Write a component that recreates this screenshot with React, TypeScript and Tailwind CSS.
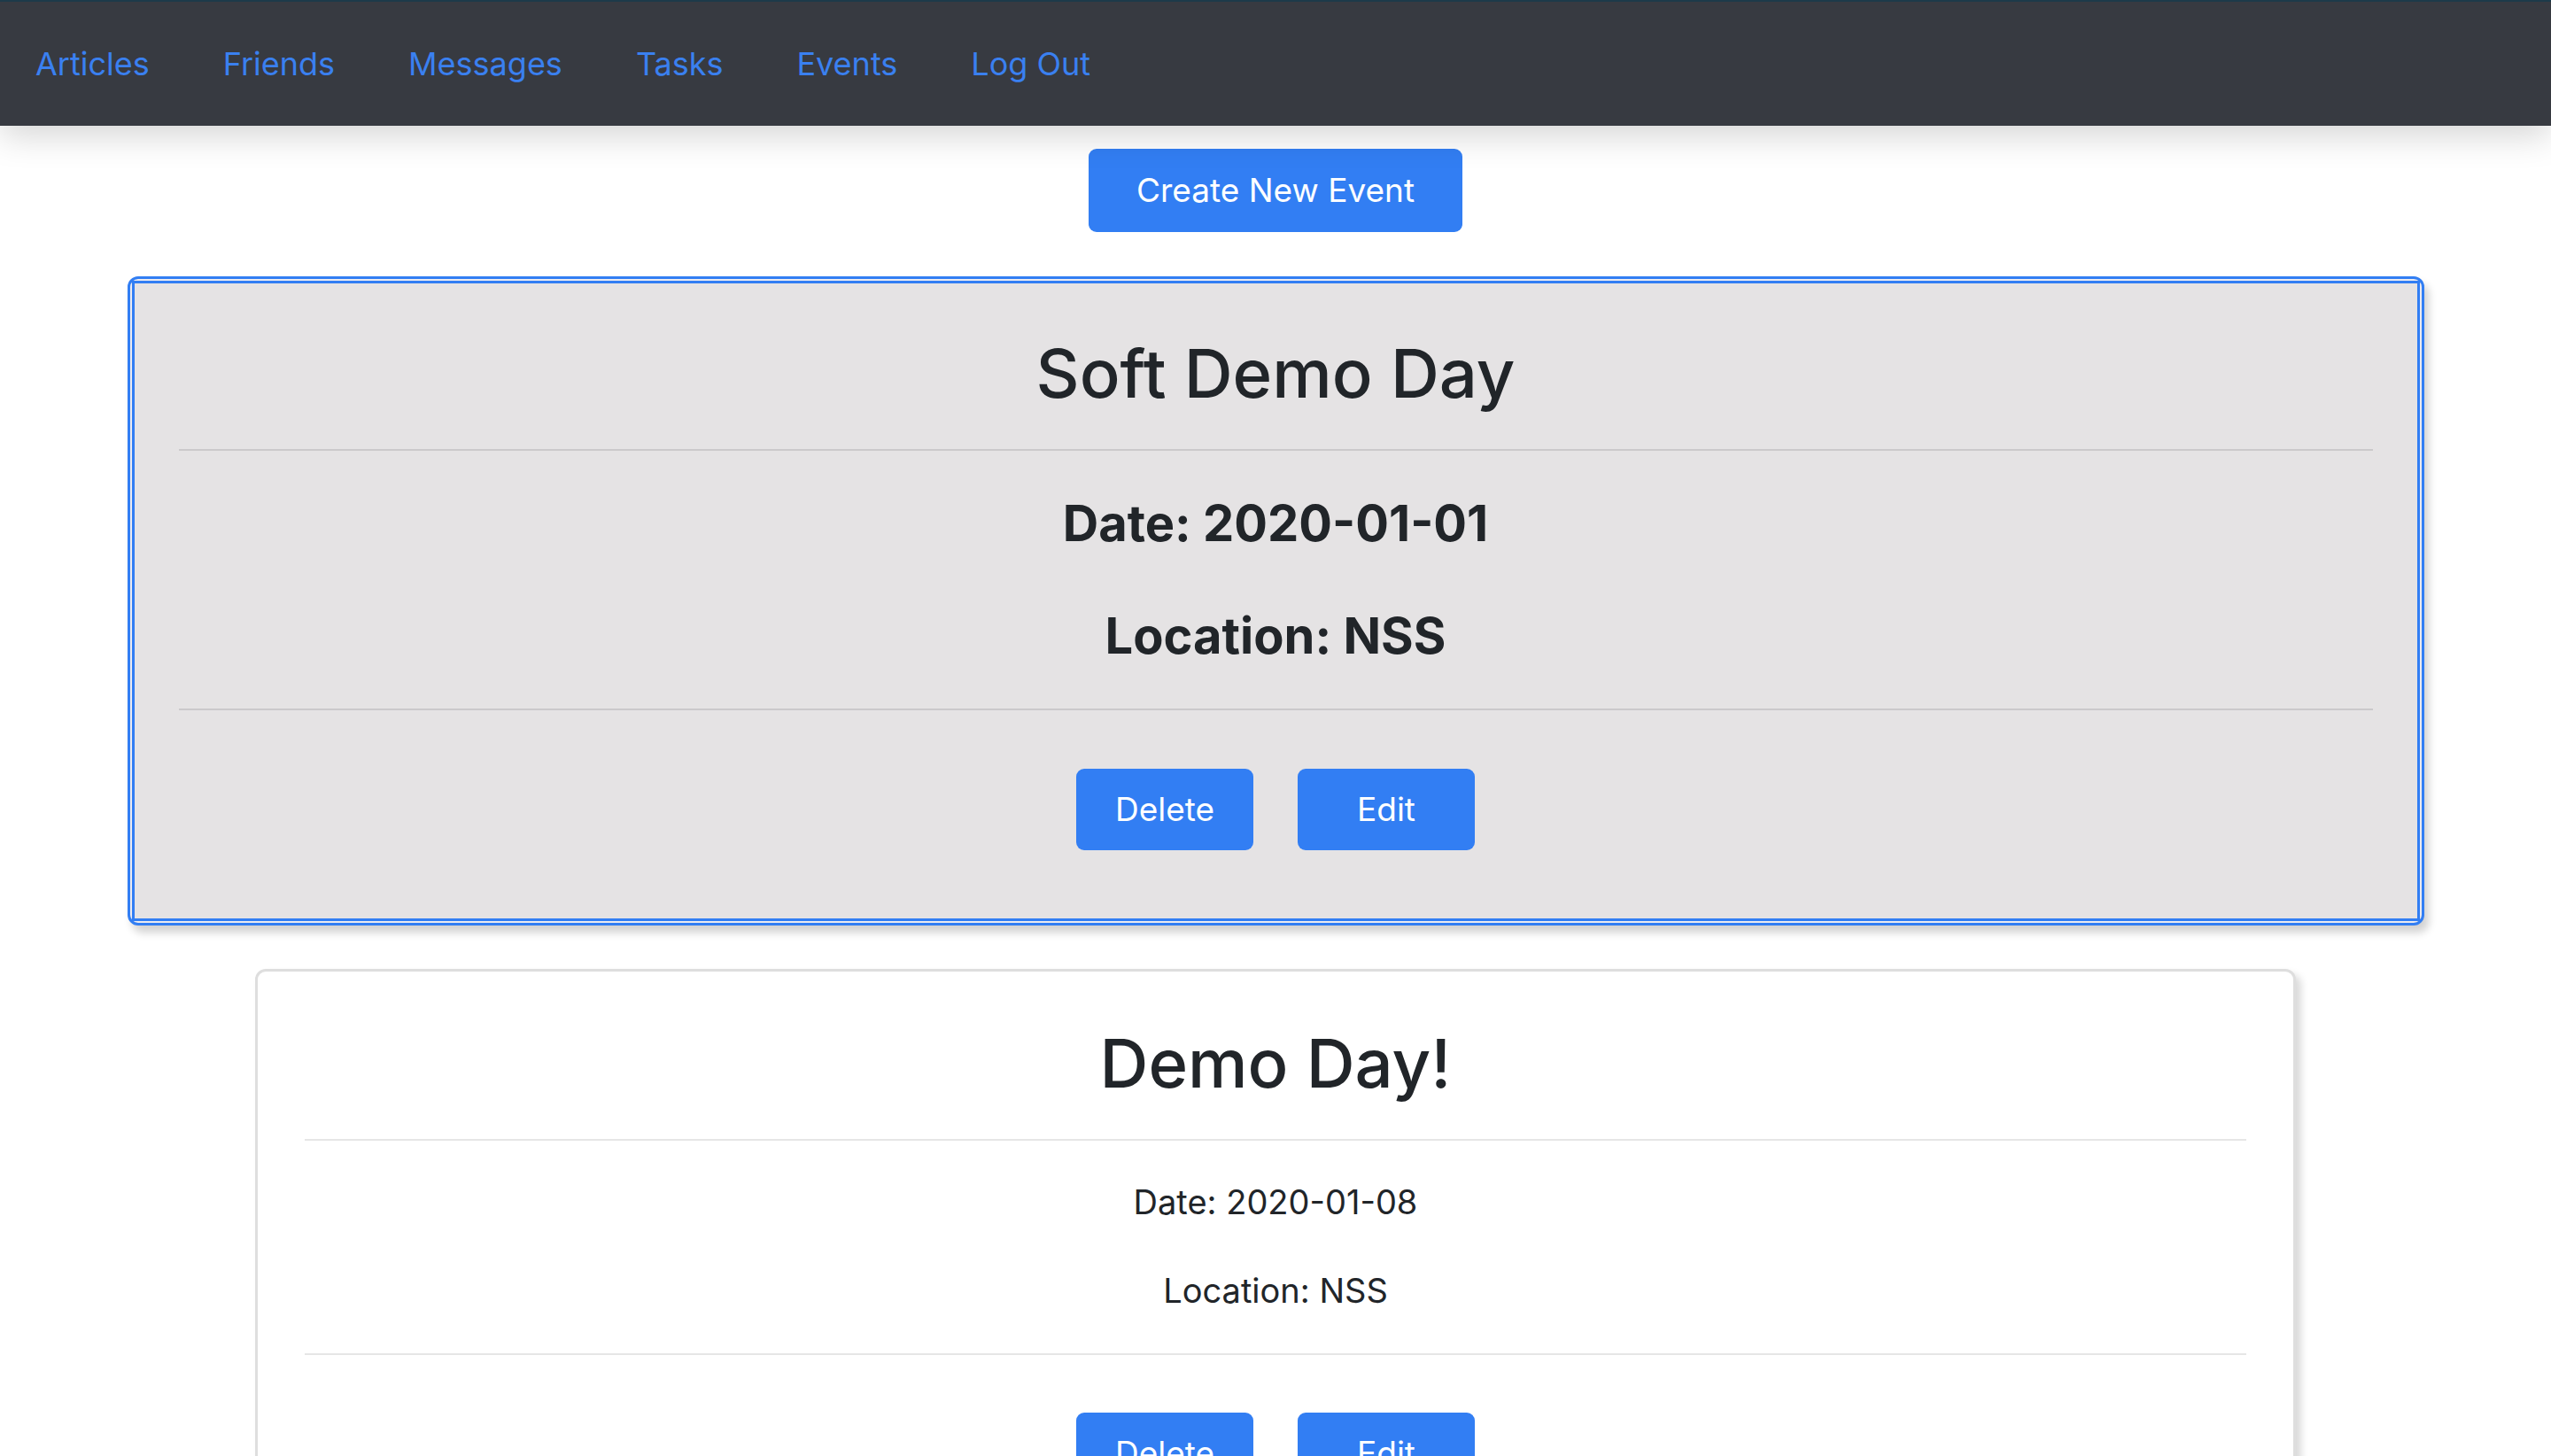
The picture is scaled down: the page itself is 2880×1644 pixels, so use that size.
const links = ["Articles", "Friends", "Messages", "Tasks", "Events", "Log Out"];

interface EventItem {
  id: number;
  name: string;
  date: string;
  location: string;
}

const events: EventItem[] = [
  { id: 1, name: "Soft Demo Day", date: "2020-01-01", location: "NSS" },
  { id: 2, name: "Demo Day!", date: "2020-01-08", location: "NSS" },
];

function CardButtons() {
  return (
    <div className="flex justify-center gap-[50px]">
      <button className="w-[200px] h-[92px] rounded-[9px] bg-[#327ef3] text-white text-[37px]">
        Delete
      </button>
      <button className="w-[200px] h-[92px] rounded-[9px] bg-[#327ef3] text-white text-[37px]">
        Edit
      </button>
    </div>
  );
}

function ActiveCard({ event }: { event: EventItem }) {
  return (
    <div className="w-[2593px] mx-auto rounded-[12px] border-[3px] border-[#327ef3] p-[2px] bg-[#ecebf0] shadow-[5px_8px_10px_rgba(0,0,0,0.18)]">
      <div className="border-[3px] border-[#327ef3] bg-[#e5e3e4] px-[50px] pt-[53px] pb-[77px] text-center">
        <h1 className="text-[76px] leading-[96px] font-medium">{event.name}</h1>
        <hr className="mt-[38px] border-0 h-[2px] bg-[#cbc9cb]" />
        <h3 className="mt-[49px] text-[56px] leading-[67px] font-bold">Date: {event.date}</h3>
        <h3 className="mt-[60px] text-[56px] leading-[67px] font-bold">Location: {event.location}</h3>
        <hr className="mt-[48px] border-0 h-[2px] bg-[#cbc9cb]" />
        <div className="mt-[66px]">
          <CardButtons />
        </div>
      </div>
    </div>
  );
}

function EventCard({ event }: { event: EventItem }) {
  return (
    <div className="w-[2304px] mx-auto rounded-[12px] border-[3px] border-[#dedede] bg-white shadow-[6px_6px_8px_rgba(0,0,0,0.15)] px-[53px] pt-[55px] pb-[77px] text-center">
      <h1 className="text-[76px] leading-[96px] font-medium">{event.name}</h1>
      <hr className="mt-[38px] border-0 h-[2px] bg-[#e6e6e6]" />
      <p className="mt-[42px] text-[38px] leading-[54px]">Date: {event.date}</p>
      <p className="mt-[46px] text-[38px] leading-[54px]">Location: {event.location}</p>
      <hr className="mt-[44px] border-0 h-[2px] bg-[#e6e6e6]" />
      <div className="mt-[65px]">
        <CardButtons />
      </div>
    </div>
  );
}

export default function App() {
  return (
    <div
      className="min-h-screen bg-white text-[#212529]"
      style={{ fontFamily: "Inter, 'Noto Sans', sans-serif" }}
    >
      <nav className="relative z-10 h-[142px] border-t-2 border-[#1d3a4a] bg-[#373a41] shadow-[0_12px_36px_rgba(0,0,0,0.16)] flex items-center pl-[40px] gap-[83px]">
        {links.map((l) => (
          <a key={l} className="text-[36px] text-[#3a80f0] cursor-pointer">
            {l}
          </a>
        ))}
      </nav>

      <main className="pt-[26px] pb-[60px]">
        <div className="flex justify-center">
          <button className="w-[422px] h-[94px] rounded-[9px] bg-[#327ef3] text-white text-[37px]">
            Create New Event
          </button>
        </div>

        <div className="mt-[50px] flex flex-col gap-[49px]">
          <ActiveCard event={events[0]} />
          <EventCard event={events[1]} />
        </div>
      </main>
    </div>
  );
}
